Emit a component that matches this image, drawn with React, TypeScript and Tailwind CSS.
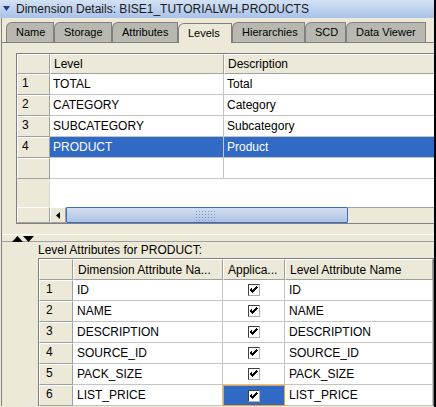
import React from 'react';

const raised =
  'bg-[#ece9d8] border border-t-white border-l-white border-r-[#a0a0a0] border-b-[#a0a0a0]';
const grid = 'border-r border-b border-[#c4c4c4]';

const levels = [
  ['TOTAL', 'Total'],
  ['CATEGORY', 'Category'],
  ['SUBCATEGORY', 'Subcategory'],
  ['PRODUCT', 'Product'],
];

const attrs = ['ID', 'NAME', 'DESCRIPTION', 'SOURCE_ID', 'PACK_SIZE', 'LIST_PRICE'];

const tabs = [
  { label: 'Name', w: 'w-[48px]' },
  { label: 'Storage', w: 'w-[58px]' },
  { label: 'Attributes', w: 'w-[66px]' },
  { label: 'Levels', w: 'w-[54px]', active: true },
  { label: 'Hierarchies', w: 'w-[73px]' },
  { label: 'SCD', w: 'w-[41px]' },
  { label: 'Data Viewer', w: 'w-[80px]' },
];

function Check() {
  return (
    <span className="flex h-[12px] w-[12px] items-center justify-center border border-t-[#404040] border-l-[#404040] border-r-[#b0b0b0] border-b-[#b0b0b0] bg-white">
      <svg width="8" height="8" viewBox="0 0 8 8" shapeRendering="crispEdges">
        <path d="M0.5 3 L2.8 5.4 L7.5 0.8" fill="none" stroke="#000" strokeWidth="2.2" />
      </svg>
    </span>
  );
}

export default function App() {
  return (
    <div
      className="relative h-[407px] w-[436px] overflow-hidden border-r-2 border-black bg-[#ece9d8] text-black"
      style={{ fontFamily: '"Liberation Sans", Arial, sans-serif' }}
    >
      {/* title bar */}
      <div className="flex h-[18px] items-center bg-gradient-to-b from-[#d4e1f4] to-[#a9c2e8] text-[12px] text-[#1a1a1a]">
        <svg className="ml-[3px] mr-[6px]" width="7" height="6" viewBox="0 0 7 6">
          <path d="M0 0 H7 L3.5 5 Z" fill="#1d4191" />
        </svg>
        <span>Dimension Details: BISE1_TUTORIALWH.PRODUCTS</span>
      </div>

      <div className="ml-[1px] border-l border-[#808080]">
        {/* tabs */}
        <div className="flex h-[24px] items-end pl-[4px] text-[11px]">
          {tabs.map((t) => (
            <div
              key={t.label}
              className={`flex h-[20px] ${t.w} items-center rounded-tl-[6px] border border-b-0 border-[#808080] pl-[9px] ${
                t.active ? 'relative top-[1px] bg-[#ece9d8]' : 'bg-[#b8b8b0]'
              }`}
            >
              {t.label}
            </div>
          ))}
        </div>

        {/* tab panel */}
        <div className="h-[193px] border-t border-b border-t-[#808080] border-b-white pt-[10px]">
          <div className="ml-[14px] w-[425px] border-l border-t border-[#808080] text-[12px]">
            <div className="flex h-[20px]">
              <div className={`${raised} w-[33px]`} />
              <div className={`${raised} flex w-[174px] items-center pl-[3px]`}>Level</div>
              <div className={`${raised} flex flex-1 items-center pl-[3px]`}>Description</div>
            </div>
            {levels.map(([l, d], i) => {
              const sel = i === 3;
              return (
                <div key={l} className="flex h-[21px]">
                  <div className={`${raised} flex w-[33px] items-end pb-[2px] pl-[4px]`}>{i + 1}</div>
                  <div
                    className={`${grid} flex w-[174px] items-center pl-[3px] ${
                      sel ? 'bg-[#316ac5] text-white' : 'bg-white'
                    }`}
                  >
                    {l}
                  </div>
                  <div
                    className={`${grid} flex flex-1 items-center pl-[3px] ${
                      sel ? 'bg-[#316ac5] text-white' : 'bg-white'
                    }`}
                  >
                    {d}
                  </div>
                </div>
              );
            })}
            <div className="flex h-[21px]">
              <div className={`${raised} w-[33px]`} />
              <div className={`${grid} w-[174px] bg-white`} />
              <div className={`${grid} flex-1 bg-white`} />
            </div>
            <div className="flex h-[28px]">
              <div className="w-[33px] border-r border-[#d8d8d8] bg-[#ece9d8]" />
              <div className="flex-1 bg-white" />
            </div>
            {/* horizontal scrollbar */}
            <div className="flex h-[17px] border-b border-[#808080]">
              <div className={`${raised} w-[33px]`} />
              <div className={`${raised} flex w-[16px] items-center justify-center`}>
                <svg width="4" height="7" viewBox="0 0 4 7">
                  <path d="M4 0 V7 L0 3.5 Z" fill="#000" />
                </svg>
              </div>
              <div className="flex w-[282px] items-center justify-end rounded-[1px] border border-[#3a6cc6] bg-gradient-to-b from-[#d3def0] to-[#aec3e3] pr-[131px]">
                <div className="h-[11px] w-[21px] bg-[radial-gradient(#7f98c4_0.8px,transparent_1px)] bg-[length:3px_3px]" />
              </div>
              <div className="flex-1 border-t border-[#a0a0a0] bg-[#ece9d8]" />
            </div>
          </div>
        </div>

        {/* splitter */}
        <div className="relative h-[7px] border-b border-[#a0a0a0]">
          <svg className="absolute left-[10px] top-[1px]" width="22" height="6" viewBox="0 0 22 6">
            <path d="M0 6 L5.5 0 L11 6 Z" fill="#000" />
            <path d="M11 0 H22 L16.5 6 Z" fill="#000" />
          </svg>
        </div>

        {/* level attributes */}
        <div className="ml-[36px] flex h-[16px] items-center text-[12px]">
          Level Attributes for PRODUCT:
        </div>
        <div className="ml-[36px] w-[396px] border-l border-t border-r border-[#808080] text-[12px]">
          <div className="flex h-[21px]">
            <div className={`${raised} w-[34px]`} />
            <div className={`${raised} flex w-[150px] items-center pl-[4px]`}>Dimension Attribute Na...</div>
            <div className={`${raised} flex w-[62px] items-center pl-[4px]`}>Applica...</div>
            <div className={`${raised} flex flex-1 items-center pl-[4px]`}>Level Attribute Name</div>
          </div>
          {attrs.map((a, i) => {
            const sel = i === 5;
            return (
              <div key={a} className="flex h-[21px]">
                <div className={`${raised} flex w-[34px] items-end pb-[2px] pl-[6px]`}>{i + 1}</div>
                <div className={`${grid} flex w-[150px] items-center bg-white pl-[4px]`}>{a}</div>
                <div
                  className={`flex w-[62px] items-center justify-center ${
                    sel ? 'border border-[#f0a030] bg-[#316ac5]' : `${grid} bg-white`
                  }`}
                >
                  <Check />
                </div>
                <div className={`${grid} flex flex-1 items-center bg-white pl-[4px]`}>{a}</div>
              </div>
            );
          })}
        </div>
      </div>
    </div>
  );
}
